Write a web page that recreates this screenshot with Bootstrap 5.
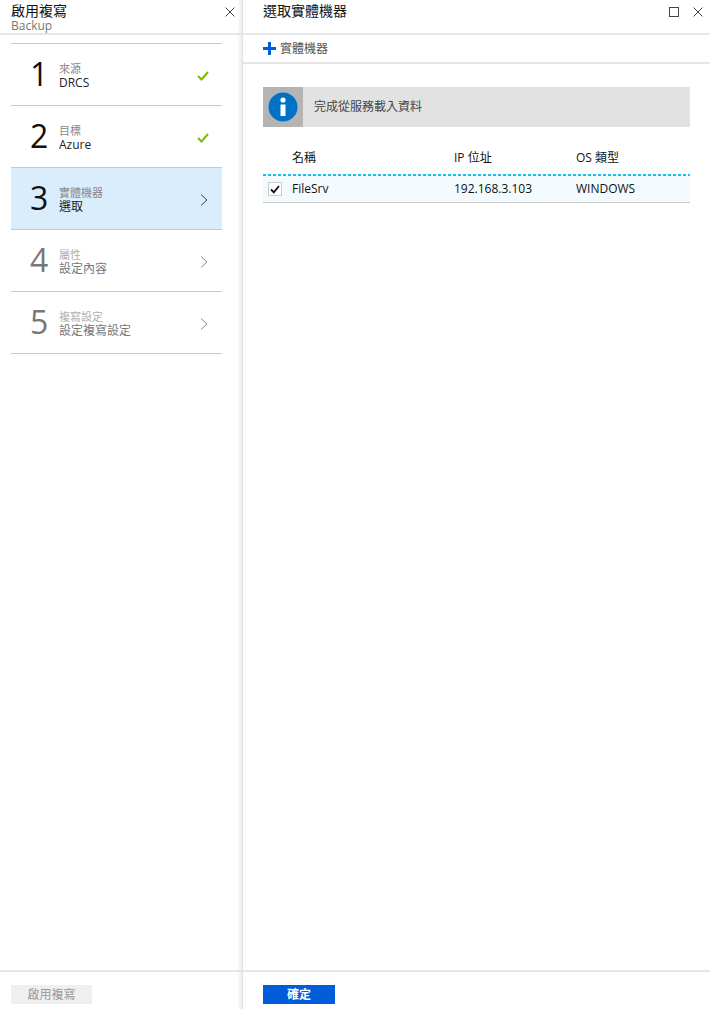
<!DOCTYPE html>
<html lang="zh-Hant">
<head>
    <meta charset="UTF-8">
    <title>啟用複寫</title>
    <link href="https://cdn.jsdelivr.net/npm/bootstrap@5.3.0/dist/css/bootstrap.min.css" rel="stylesheet">
    <style>
        html, body { height: 100%; overflow: hidden; }
        body { font-family: "Open Sans", "Noto Sans CJK TC", sans-serif; font-size: 12px; color: #111; background: #fff; }
        .blade-left { width: 243px; border-right: 1px solid #e0e0e0; background: linear-gradient(to right, #fff, #ececec) right top / 5px 100% no-repeat; }
        .blade-head { height: 35px; border-bottom: 2px solid #e6e6e6; }
        .blade-left .blade-head { padding: 2px 11px 0; }
        .blade-right .blade-head { padding: 2px 20px 0; }
        .head-title { font-size: 14px; line-height: 17px; color: #111; }
        .head-sub { font-size: 12px; line-height: 13px; color: #777; }
        .blade-x { top: 7px; right: 7px; }
        .blade-max { top: 7px; right: 31px; }
        .step-list { margin: 8px 20px 0 11px; border-top: 1px solid #c8c8c8; }
        .step-row { height: 62px; border-bottom: 1px solid #c8c8c8; padding-left: 19px; padding-right: 12px; }
        .step-row.is-active { background: #daedfd; }
        .step-num { width: 29px; margin-bottom: 2px; font-size: 32px; line-height: 1; font-family: "Open Sans", sans-serif; }
        .step-text { padding-top: 2px; }
        .step-label { font-size: 11px; line-height: 14px; color: #888; }
        .step-value { font-size: 12px; line-height: 14px; color: #222; }
        .step-arrow { margin: 2px 2px 0 0; }
        .step-check { margin: 2px 1px 0 0; }
        .is-off .step-num { color: #777; }
        .is-off .step-label { color: #b0b0b0; }
        .is-off .step-value { color: #777; }
        .blade-foot { height: 39px; border-top: 2px solid #e6e6e6; }
        .btn-off, .btn-ok { height: 19px; font-size: 12px; line-height: 19px; text-align: center; }
        .btn-off { width: 81px; margin: 13px 0 0 11px; background: #efefef; color: #999; }
        .btn-ok { width: 72px; margin: 13px 0 0 20px; background: #005cd9; color: #fff; font-weight: 700; }
        .cmd-bar { height: 29px; border-bottom: 2px solid #e6e6e6; padding-left: 20px; color: #555; }
        .info-box { height: 40px; margin: 23px 20px 0; background: #e2e2e2; }
        .info-icon { width: 40px; background: #b4b4b4; }
        .info-text { padding-left: 11px; color: #444; }
        .vm-table { margin: 18px 20px 0; }
        .vm-head { height: 29px; padding-bottom: 3px; color: #111; }
        .vm-row {
            height: 29px;
            border-top: 2px solid transparent;
            border-bottom: 1px solid #c8c8c8;
            background: repeating-linear-gradient(to right, #19bdf0 0 3px, transparent 3px 5px) left top / 100% 2px no-repeat border-box, #f4fbff;
        }
        .cell-check { width: 29px; padding-left: 5px; }
        .check-box { width: 14px; height: 14px; border: 1px solid #ccc; background: #fff; }
        .cell-name { width: 162px; }
        .cell-ip { width: 122px; }
    </style>
</head>
<body>
<div class="d-flex h-100">
    <!-- left blade -->
    <div class="blade-left d-flex flex-column flex-shrink-0 position-relative">
        <div class="blade-head">
            <div class="head-title">啟用複寫</div>
            <div class="head-sub">Backup</div>
        </div>
        <svg class="blade-x position-absolute" width="10" height="10" viewBox="0 0 10 10"><path d="M.5.5l9 9M9.500.5l-9 9" stroke="#444" fill="none"/></svg>
        <div class="step-list flex-grow-1">
            <div class="step-row d-flex align-items-center">
                <div class="step-num">1</div>
                <div class="step-text flex-grow-1"><div class="step-label">來源</div><div class="step-value">DRCS</div></div>
                <svg class="step-check" width="12" height="10" viewBox="0 0 12 10"><path d="M1 5l3.500 3.500L11 1" stroke="#7fba00" stroke-width="2" fill="none"/></svg>
            </div>
            <div class="step-row d-flex align-items-center">
                <div class="step-num">2</div>
                <div class="step-text flex-grow-1"><div class="step-label">目標</div><div class="step-value">Azure</div></div>
                <svg class="step-check" width="12" height="10" viewBox="0 0 12 10"><path d="M1 5l3.500 3.500L11 1" stroke="#7fba00" stroke-width="2" fill="none"/></svg>
            </div>
            <div class="step-row is-active d-flex align-items-center">
                <div class="step-num">3</div>
                <div class="step-text flex-grow-1"><div class="step-label">實體機器</div><div class="step-value">選取</div></div>
                <svg class="step-arrow" width="8" height="12" viewBox="0 0 8 12"><path d="M1 .5L7 6l-6 5.500" stroke="#444" fill="none"/></svg>
            </div>
            <div class="step-row is-off d-flex align-items-center">
                <div class="step-num">4</div>
                <div class="step-text flex-grow-1"><div class="step-label">屬性</div><div class="step-value">設定內容</div></div>
                <svg class="step-arrow" width="8" height="12" viewBox="0 0 8 12"><path d="M1 .5L7 6l-6 5.500" stroke="#888" fill="none"/></svg>
            </div>
            <div class="step-row is-off d-flex align-items-center">
                <div class="step-num">5</div>
                <div class="step-text flex-grow-1"><div class="step-label">複寫設定</div><div class="step-value">設定複寫設定</div></div>
                <svg class="step-arrow" width="8" height="12" viewBox="0 0 8 12"><path d="M1 .5L7 6l-6 5.500" stroke="#888" fill="none"/></svg>
            </div>
        </div>
        <div class="blade-foot"><div class="btn-off">啟用複寫</div></div>
    </div>

    <!-- right blade -->
    <div class="blade-right d-flex flex-column flex-grow-1 position-relative">
        <div class="blade-head"><div class="head-title">選取實體機器</div></div>
        <svg class="blade-max position-absolute" width="10" height="10" viewBox="0 0 10 10"><rect x=".5" y=".5" width="9" height="9" stroke="#444" fill="none"/></svg>
        <svg class="blade-x position-absolute" width="10" height="10" viewBox="0 0 10 10"><path d="M.5.5l9 9M9.500.5l-9 9" stroke="#444" fill="none"/></svg>
        <div class="cmd-bar d-flex align-items-center gap-1">
            <svg width="13" height="13" viewBox="0 0 13 13"><path d="M6.500 0v13M0 6.500h13" stroke="#005cd9" stroke-width="3" fill="none"/></svg>
            <span>實體機器</span>
        </div>
        <div class="info-box d-flex">
            <div class="info-icon d-flex align-items-center justify-content-center">
                <svg width="30" height="30" viewBox="0 0 30 30"><circle cx="15" cy="15" r="14.500" fill="#0072c6"/><circle cx="15" cy="8" r="2.600" fill="#fff"/><rect x="12.500" y="12.500" width="5" height="11.500" fill="#fff"/></svg>
            </div>
            <div class="info-text d-flex align-items-center">完成從服務載入資料</div>
        </div>
        <div class="vm-table">
            <div class="vm-head d-flex align-items-center">
                <div class="cell-check"></div>
                <div class="cell-name">名稱</div>
                <div class="cell-ip">IP 位址</div>
                <div>OS 類型</div>
            </div>
            <div class="vm-row d-flex align-items-center">
                <div class="cell-check"><div class="check-box d-flex align-items-center justify-content-center"><svg width="10" height="9" viewBox="0 0 10 9"><path d="M1 4.500l2.800 2.800L9 1" stroke="#111" stroke-width="1.800" fill="none"/></svg></div></div>
                <div class="cell-name">FileSrv</div>
                <div class="cell-ip">192.168.3.103</div>
                <div>WINDOWS</div>
            </div>
        </div>
        <div class="flex-grow-1"></div>
        <div class="blade-foot"><div class="btn-ok">確定</div></div>
    </div>
</div>
<script src="https://cdn.jsdelivr.net/npm/bootstrap@5.3.0/dist/js/bootstrap.bundle.min.js"></script>
</body>
</html>
